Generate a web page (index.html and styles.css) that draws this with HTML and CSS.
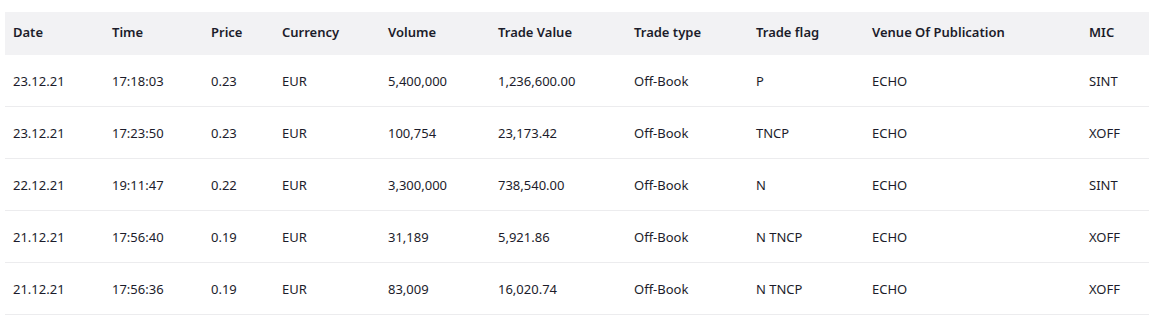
FILE: index.html
```html
<!DOCTYPE html>
<html lang="en">
<head>
<meta charset="utf-8">
<title>Trades</title>
<link rel="stylesheet" href="styles.css">
</head>
<body>
<div class="table">
  <div class="row head">
    <div class="cell">Date</div><div class="cell">Time</div><div class="cell">Price</div><div class="cell">Currency</div><div class="cell">Volume</div><div class="cell">Trade Value</div><div class="cell">Trade type</div><div class="cell">Trade flag</div><div class="cell">Venue Of Publication</div><div class="cell">MIC</div>
  </div>
  <div class="row">
    <div class="cell">23.12.21</div><div class="cell">17:18:03</div><div class="cell">0.23</div><div class="cell">EUR</div><div class="cell">5,400,000</div><div class="cell">1,236,600.00</div><div class="cell">Off-Book</div><div class="cell">P</div><div class="cell">ECHO</div><div class="cell">SINT</div>
  </div>
  <div class="row">
    <div class="cell">23.12.21</div><div class="cell">17:23:50</div><div class="cell">0.23</div><div class="cell">EUR</div><div class="cell">100,754</div><div class="cell">23,173.42</div><div class="cell">Off-Book</div><div class="cell">TNCP</div><div class="cell">ECHO</div><div class="cell">XOFF</div>
  </div>
  <div class="row">
    <div class="cell">22.12.21</div><div class="cell">19:11:47</div><div class="cell">0.22</div><div class="cell">EUR</div><div class="cell">3,300,000</div><div class="cell">738,540.00</div><div class="cell">Off-Book</div><div class="cell">N</div><div class="cell">ECHO</div><div class="cell">SINT</div>
  </div>
  <div class="row">
    <div class="cell">21.12.21</div><div class="cell">17:56:40</div><div class="cell">0.19</div><div class="cell">EUR</div><div class="cell">31,189</div><div class="cell">5,921.86</div><div class="cell">Off-Book</div><div class="cell">N TNCP</div><div class="cell">ECHO</div><div class="cell">XOFF</div>
  </div>
  <div class="row">
    <div class="cell">21.12.21</div><div class="cell">17:56:36</div><div class="cell">0.19</div><div class="cell">EUR</div><div class="cell">83,009</div><div class="cell">16,020.74</div><div class="cell">Off-Book</div><div class="cell">N TNCP</div><div class="cell">ECHO</div><div class="cell">XOFF</div>
  </div>
</div>
</body>
</html>
```

FILE: styles.css
```css
html, body {
  margin: 0;
  padding: 0;
  background: #ffffff;
}
body {
  padding: 12px 13px 0 5px;
  font-family: "Noto Sans", "Open Sans", sans-serif;
  font-size: 13px;
  color: #1c1c2b;
}
.table {
  width: 1144px;
}
.row {
  display: grid;
  grid-template-columns: 99px 99px 71px 106px 110px 136px 122px 116px 217px 68px;
  height: 52px;
  align-items: center;
  border-bottom: 1px solid #ececee;
  box-sizing: border-box;
}
.row.head {
  height: 43px;
  padding-bottom: 3px;
  background: #f2f2f4;
  border-bottom: none;
  font-weight: 600;
}
.cell {
  padding-left: 8px;
  white-space: nowrap;
}
```
